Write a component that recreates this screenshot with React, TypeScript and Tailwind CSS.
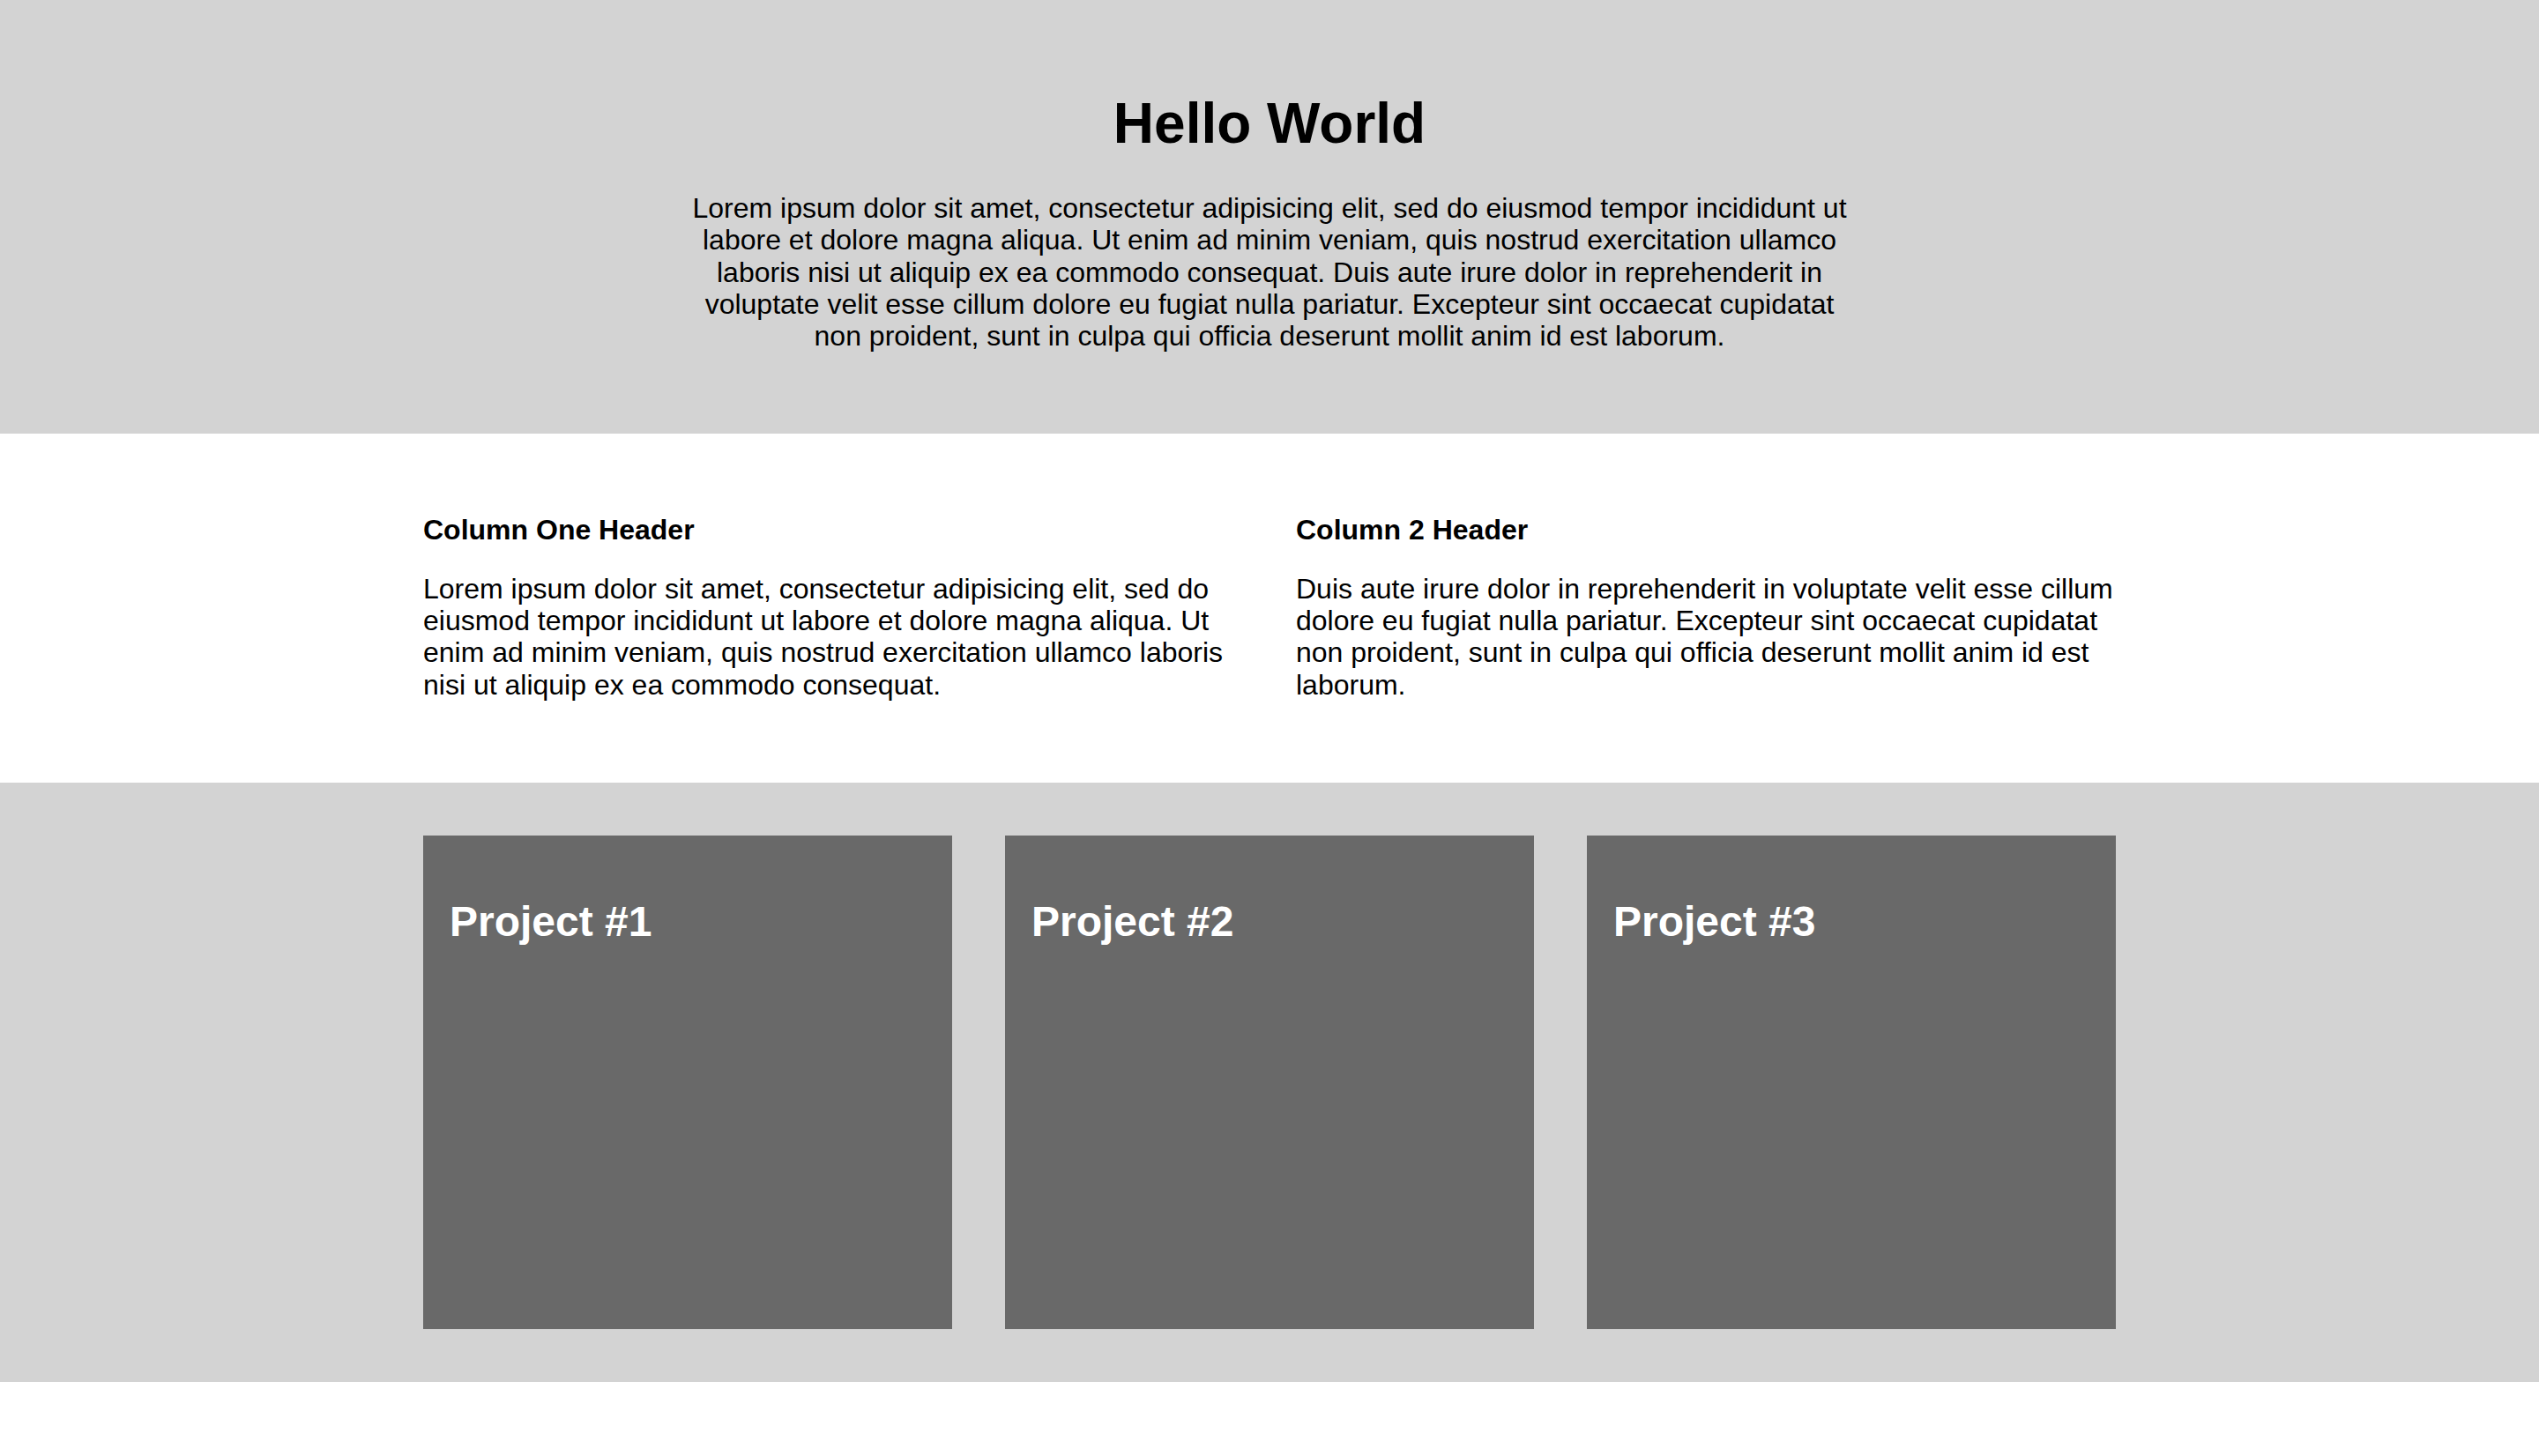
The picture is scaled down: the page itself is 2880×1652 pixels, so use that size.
import React from 'react';

const projects = ['Project #1', 'Project #2', 'Project #3'];

const columns = [
  {
    title: 'Column One Header',
    body: 'Lorem ipsum dolor sit amet, consectetur adipisicing elit, sed do eiusmod tempor incididunt ut labore et dolore magna aliqua. Ut enim ad minim veniam, quis nostrud exercitation ullamco laboris nisi ut aliquip ex ea commodo consequat.',
  },
  {
    title: 'Column 2 Header',
    body: 'Duis aute irure dolor in reprehenderit in voluptate velit esse cillum dolore eu fugiat nulla pariatur. Excepteur sint occaecat cupidatat non proident, sunt in culpa qui officia deserunt mollit anim id est laborum.',
  },
];

export default function App() {
  return (
    <div className="min-h-screen bg-white text-black font-['Liberation_Sans',Arial,sans-serif]">
      {/* hero */}
      <section className="bg-[#d3d3d3] pt-[103px] pb-[93px] text-center">
        <h1 className="text-[64px] leading-[74px] font-bold">Hello World</h1>
        <p className="mx-auto mt-[41px] max-w-[1320px] text-[32px] leading-[36.25px]">
          Lorem ipsum dolor sit amet, consectetur adipisicing elit, sed do eiusmod tempor incididunt ut labore et dolore magna aliqua. Ut enim ad minim veniam, quis nostrud exercitation ullamco laboris nisi ut aliquip ex ea commodo consequat. Duis aute irure dolor in reprehenderit in voluptate velit esse cillum dolore eu fugiat nulla pariatur. Excepteur sint occaecat cupidatat non proident, sunt in culpa qui officia deserunt mollit anim id est laborum.
        </p>
      </section>

      {/* two columns */}
      <section className="pt-[91px] pb-[93px]">
        <div className="mx-auto grid w-[1920px] grid-cols-2 gap-[60px]">
          {columns.map((col) => (
            <div key={col.title}>
              <h4 className="text-[32px] leading-[36px] font-bold">{col.title}</h4>
              <p className="mt-[31px] text-[32px] leading-[36.1px]">{col.body}</p>
            </div>
          ))}
        </div>
      </section>

      {/* projects */}
      <section className="bg-[#d3d3d3] py-[60px]">
        <div className="mx-auto grid w-[1920px] grid-cols-3 gap-[60px]">
          {projects.map((name) => (
            <div key={name} className="h-[560px] bg-[#696969] p-[30px]">
              <h2 className="mt-[40px] text-[48px] leading-[55px] font-bold text-white">{name}</h2>
            </div>
          ))}
        </div>
      </section>
    </div>
  );
}
